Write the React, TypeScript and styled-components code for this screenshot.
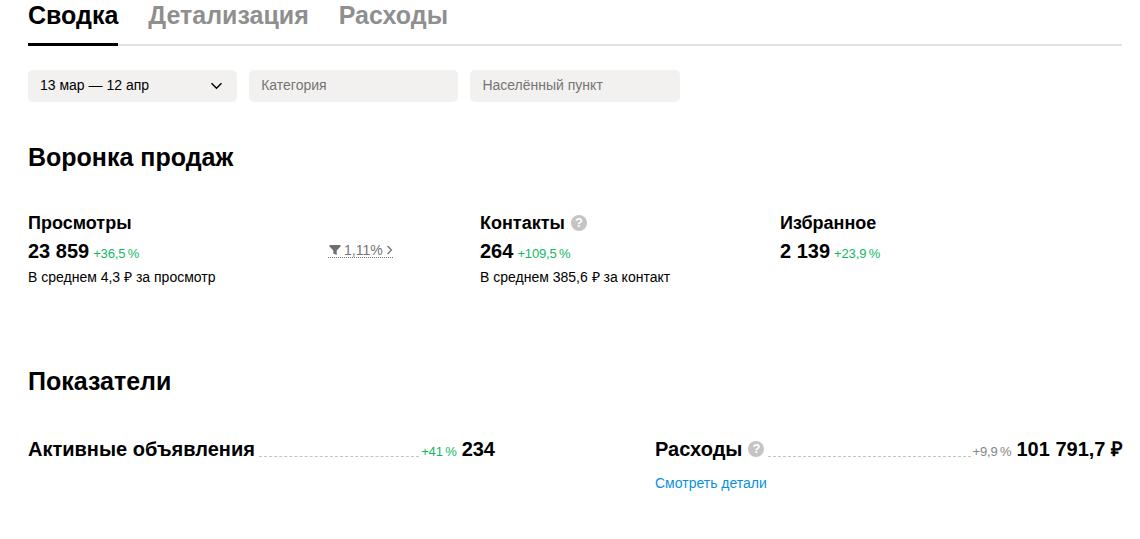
import { useState } from "react";
import styled, { createGlobalStyle } from "styled-components";

const GlobalStyle = createGlobalStyle`
  * {
    box-sizing: border-box;
  }
  body {
    margin: 0;
    background: #fff;
    color: #000;
    font-family: "Liberation Sans", Arial, sans-serif;
  }
  button {
    border: 0;
    padding: 0;
    background: none;
    font-family: inherit;
    text-align: left;
    cursor: pointer;
  }
`;

const Page = styled.main`
  width: 1140px;
  height: 539px;
  overflow: hidden;
  padding: 0 18px 0 28px;
`;

const Tabs = styled.nav`
  display: flex;
  column-gap: 30px;
  height: 46px;
  box-shadow: inset 0 -2px #e1e1e1;
`;

const Tab = styled.button<{ $active: boolean }>`
  height: 46px;
  padding-bottom: 12px;
  border-bottom: 3px solid ${({ $active }) => ($active ? "#000" : "transparent")};
  color: ${({ $active }) => ($active ? "#000" : "#8f8f8f")};
  font-size: 25px;
  font-weight: 700;
  line-height: 31px;
  white-space: nowrap;
`;

const Filters = styled.div`
  display: flex;
  column-gap: 12px;
  margin-top: 24px;
`;

const Field = styled.button<{ $filled?: boolean }>`
  display: flex;
  align-items: center;
  justify-content: space-between;
  width: 209.2px;
  height: 32px;
  padding: 0 14px 2px 12px;
  border-radius: 5px;
  background: #f2f1f0;
  color: ${({ $filled }) => ($filled ? "#000" : "#757575")};
  font-size: 14px;

  svg {
    margin-top: 2px;
  }
`;

const Title = styled.h2`
  margin: 0;
  font-size: 25px;
  line-height: 30px;
`;

const Funnel = styled.section`
  margin-top: 40px;
`;

const FunnelRow = styled.div`
  display: grid;
  grid-template-columns: 300px 152px 300px 1fr;
  margin-top: 40px;
`;

const Name = styled.h3`
  display: flex;
  align-items: center;
  column-gap: 6px;
  margin: 0;
  font-size: 18px;
  line-height: 22px;
  white-space: nowrap;
`;

const Value = styled.div`
  display: flex;
  align-items: baseline;
  column-gap: 4px;
  margin-top: 4px;
  font-size: 20px;
  font-weight: 700;
  line-height: 26px;
  white-space: nowrap;
`;

const Delta = styled.span<{ $muted?: boolean }>`
  color: ${({ $muted }) => ($muted ? "#858585" : "#12b85f")};
  font-size: 13px;
  font-weight: 400;
  letter-spacing: -0.15px;
`;

const Note = styled.div`
  margin-top: 1px;
  font-size: 14px;
  line-height: 18px;
  white-space: nowrap;
`;

const Conversion = styled.button`
  display: flex;
  align-items: center;
  justify-self: start;
  align-self: start;
  column-gap: 3px;
  width: 65px;
  height: 18px;
  margin-top: 28px;
  padding-top: 3px;
  border-bottom: 1px dotted #777;
  color: #757575;
  font-size: 14px;
  line-height: 16px;
`;

const Indicators = styled.section`
  margin-top: 80px;
`;

const IndicatorRow = styled.div`
  display: grid;
  grid-template-columns: 467px 468px;
  column-gap: 160px;
  align-items: start;
  margin-top: 40px;
`;

const Line = styled.div`
  display: flex;
  align-items: baseline;
  font-size: 20px;
  font-weight: 700;
  line-height: 26px;
  white-space: nowrap;
`;

const Label = styled.span`
  display: flex;
  align-items: center;
  column-gap: 6px;
`;

const Leader = styled.span`
  flex: 1;
  align-self: flex-end;
  margin: 0 2px 8px 4px;
  border-bottom: 1px dashed #c4c4c4;
`;

const Amount = styled.span`
  margin-left: 5px;
`;

const Link = styled.a`
  display: inline-block;
  margin-top: 9px;
  color: #0a8fe0;
  font-size: 14px;
  line-height: 18px;
  text-decoration: none;
`;

const Hint = styled.span`
  display: inline-flex;
  align-items: center;
  justify-content: center;
  width: 16px;
  height: 16px;
  border-radius: 50%;
  background: #c4c4c4;
  color: #fff;
  font-size: 13px;
  font-weight: 700;
  line-height: 16px;
`;

const ChevronDown = () => (
  <svg width="13" height="8" viewBox="0 0 13 8" fill="none">
    <path d="M1.5 1.2 6.5 6.2l5-5" stroke="#000" strokeWidth="1.5" />
  </svg>
);

const FilterIcon = () => (
  <svg width="13" height="12" viewBox="0 0 13 12" fill="#6f6f6f">
    <path d="M1.5 1h11v1.6L8.7 6.4V11L5.3 9.6V6.4L1.5 2.6z" />
  </svg>
);

const ChevronRight = () => (
  <svg width="7" height="10" viewBox="0 0 7 10" fill="none">
    <path d="M1.5 1 5.5 5l-4 4" stroke="#757575" strokeWidth="1.3" />
  </svg>
);

const tabs = ["Сводка", "Детализация", "Расходы"];

type MetricProps = {
  name: string;
  value: string;
  delta: string;
  note?: string;
  hint?: boolean;
};

const Metric: React.FC<MetricProps> = ({ name, value, delta, note, hint }) => (
  <div>
    <Name>
      {name}
      {hint && <Hint>?</Hint>}
    </Name>
    <Value>
      {value}
      <Delta>{delta}</Delta>
    </Value>
    {note && <Note>{note}</Note>}
  </div>
);

export default function App() {
  const [active, setActive] = useState(0);

  return (
    <>
      <GlobalStyle />
      <Page>
        <Tabs>
          {tabs.map((tab, index) => (
            <Tab
              key={tab}
              $active={index === active}
              onClick={() => setActive(index)}
            >
              {tab}
            </Tab>
          ))}
        </Tabs>
        <Filters>
          <Field $filled>
            13 мар — 12 апр
            <ChevronDown />
          </Field>
          <Field>Категория</Field>
          <Field>Населённый пункт</Field>
        </Filters>

        <Funnel>
          <Title>Воронка продаж</Title>
          <FunnelRow>
            <Metric
              name="Просмотры"
              value="23 859"
              delta={"+36,5\u2009%"}
              note="В среднем 4,3 ₽ за просмотр"
            />
            <Conversion>
              <FilterIcon />
              1,11%
              <ChevronRight />
            </Conversion>
            <Metric
              name="Контакты"
              value="264"
              delta={"+109,5\u2009%"}
              note="В среднем 385,6 ₽ за контакт"
              hint
            />
            <Metric name="Избранное" value="2 139" delta={"+23,9\u2009%"} />
          </FunnelRow>
        </Funnel>

        <Indicators>
          <Title>Показатели</Title>
          <IndicatorRow>
            <Line>
              <Label>Активные объявления</Label>
              <Leader />
              <Delta>{"+41\u2009%"}</Delta>
              <Amount>234</Amount>
            </Line>
            <div>
              <Line>
                <Label>
                  Расходы
                  <Hint>?</Hint>
                </Label>
                <Leader />
                <Delta $muted>{"+9,9\u2009%"}</Delta>
                <Amount>101 791,7 ₽</Amount>
              </Line>
              <Link href="#">Смотреть детали</Link>
            </div>
          </IndicatorRow>
        </Indicators>
      </Page>
    </>
  );
}
